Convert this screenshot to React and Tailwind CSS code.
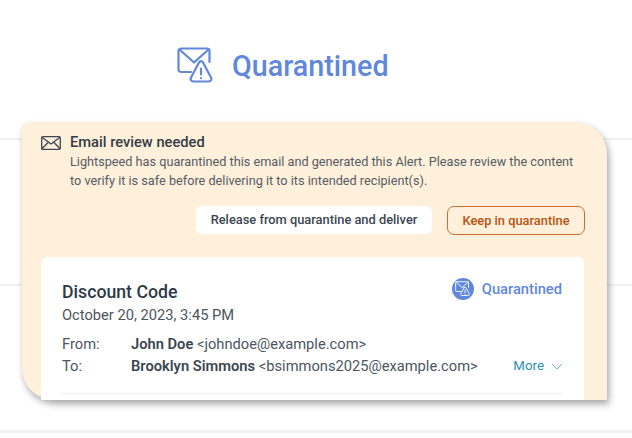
import React from 'react';

const QuarantineIcon = ({ className }) => (
  <svg viewBox="0 0 36 38" fill="none" stroke="currentColor" strokeWidth="2.2" strokeLinecap="round" strokeLinejoin="round" className={className}>
    <path d="M14 25H4a2.5 2.5 0 0 1-2.5-2.5V4A2.5 2.5 0 0 1 4 1.5h26A2.5 2.5 0 0 1 32.500 4v11" />
    <path d="M2.500 2.500 17 15.500 31.500 2.500" />
    <path d="M22 15.500 14 30.500c-1 2 .2 4 2.400 4h15.200c2.200 0 3.400-2 2.400-4l-8-15c-1-1.800-3-1.800-4 0Z" />
    <path d="M24 21.500v6" />
    <path d="M24 31v.2" />
  </svg>
);

const MailIcon = () => (
  <svg viewBox="0 0 20 14" fill="none" stroke="#3c4650" strokeWidth="1.300" strokeLinejoin="round" className="w-[20px] h-[14px] shrink-0">
    <rect x="0.700" y="0.700" width="18.600" height="12.600" rx="1.200" />
    <path d="M1 1.200 10 8l9-6.800M1 12.800l6.300-6.500M19 12.800l-6.300-6.500" />
  </svg>
);

const Line = ({ className }) => <div className={`absolute h-[2px] bg-[#f1f2f3] ${className}`} />;

export default function App() {
  return (
    <div className="relative w-[632px] h-[438px] overflow-hidden bg-white font-['Roboto',sans-serif]">
      <Line className="left-0 right-0 top-[138px]" />
      <Line className="left-0 right-0 top-[284px]" />
      <Line className="left-0 right-0 top-[430px] h-[3px]" />

      <div className="relative h-[122px] flex items-start pl-[177px] pt-[47px]">
        <div className="flex items-center gap-[19px] text-[#5f88dc]">
          <QuarantineIcon className="w-[36px] h-[38px]" />
          <h1 className="text-[28.700px] leading-[38px] font-medium">Quarantined</h1>
        </div>
      </div>

      <div className="relative ml-[22px] w-[585px] h-[278px] pt-[12px] px-[19px] bg-[#fff0dc] rounded-tl-[8px] rounded-tr-[32px] rounded-bl-[32px] shadow-[2px_4px_7px_rgba(0,0,0,0.35)]">
        <div className="flex gap-[9px]">
          <div className="pt-[2px]"><MailIcon /></div>
          <div>
            <div className="text-[14.700px] leading-[17px] font-medium text-[#333c46]">Email review needed</div>
            <p className="mt-[2px] text-[12.700px] leading-[18.500px] text-[#545c64]">
              Lightspeed has quarantined this email and generated this Alert. Please review the content<br />
              to verify it is safe before delivering it to its intended recipient(s).
            </p>
          </div>
        </div>

        <div className="mt-[16px] mr-[3px] flex justify-end gap-[15px]">
          <button className="h-[28px] w-[236px] rounded-[6px] bg-white text-[12.850px] font-medium text-[#3c4650]">Release from quarantine and deliver</button>
          <button className="h-[29px] w-[138px] rounded-[7px] border border-[#cc6d2e] text-[12.850px] font-medium text-[#b9530f]">Keep in quarantine</button>
        </div>

        <div className="mt-[22px] mr-[4px] h-[143px] rounded-t-[6px] bg-white px-[21px] pt-[24px]">
          <div className="flex justify-between items-start">
            <div>
              <h2 className="text-[17.700px] leading-[22px] font-medium text-[#2e3a46]">Discount Code</h2>
              <div className="mt-[3px] text-[14.700px] leading-[19px] text-[#4c555e]">October 20, 2023, 3:45 PM</div>
            </div>
            <div className="flex items-center gap-[8px] -mt-[3px] mr-[1px]">
              <div className="w-[22px] h-[22px] rounded-full bg-[#5f88dc] flex items-center justify-center text-white">
                <QuarantineIcon className="w-[15px] h-[16px]" />
              </div>
              <span className="text-[14.700px] font-medium text-[#5f88dc]">Quarantined</span>
            </div>
          </div>

          <div className="mt-[8px] grid grid-cols-[69px_1fr] text-[14.700px] leading-[22px] text-[#4c555e]">
            <div>From:</div>
            <div><b className="font-semibold text-[#3c4650]">John Doe</b> &lt;johndoe@example.com&gt;</div>
            <div>To:</div>
            <div className="flex justify-between items-center">
              <span><b className="font-semibold text-[#3c4650]">Brooklyn Simmons</b> &lt;bsimmons2025@example.com&gt;</span>
              <span className="flex items-center gap-[7px] text-[13.300px] text-[#2b8fb3]">
                More
                <svg viewBox="0 0 12 7" fill="none" stroke="#6db6cf" strokeWidth="1" className="w-[12px] h-[7px]"><path d="M1 1l5 5 5-5" /></svg>
              </span>
            </div>
          </div>

          <div className="mt-[16px] h-[1px] bg-[#eff0f1]" />
        </div>
      </div>
    </div>
  );
}
